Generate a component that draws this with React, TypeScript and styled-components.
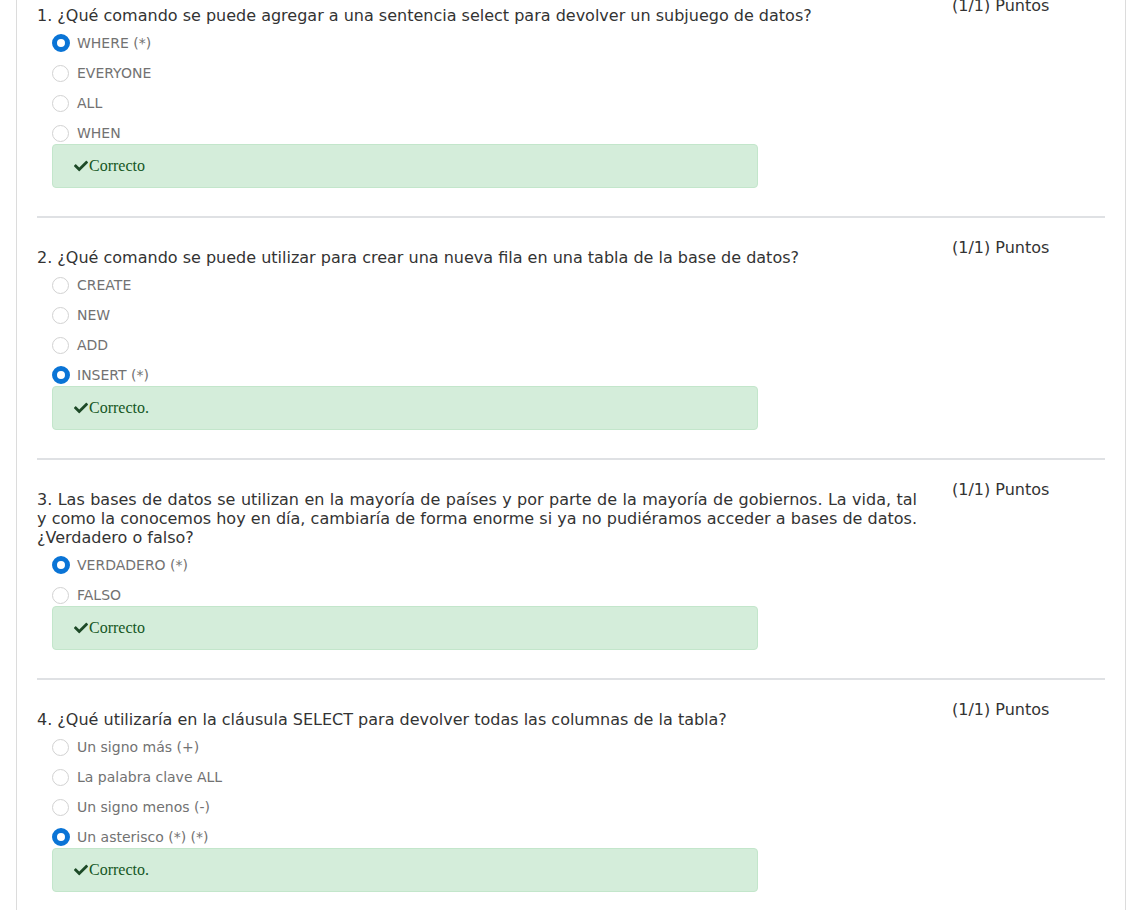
import styled, { createGlobalStyle } from "styled-components";
import { FaCheck } from "react-icons/fa";

const GlobalStyle = createGlobalStyle`
    body {
        margin: 0;
        background: #ffffff;
        font-family: "DejaVu Sans", Verdana, sans-serif;
    }
`;

const Page = styled.div`
    padding: 0 0 0 16px;
    width: 1110px;
    overflow: hidden;
    height: 910px;
`;

const Card = styled.div`
    margin-top: -26px;
    border-left: 1px solid #dcdcdc;
    border-right: 1px solid #dcdcdc;
    padding: 0 20px;
`;

const Block = styled.section`
    border-top: 2px solid #dfe1e4;
    padding: 20px 0 28px;
    display: grid;
    grid-template-columns: 880px 1fr;
    column-gap: 35px;
    align-items: start;
`;

const Main = styled.div`
    margin-top: 10px;
`;

const Question = styled.div`
    font-size: 16px;
    line-height: 19px;
    color: #333;
    text-align: justify;
`;

const Points = styled.div`
    font-size: 16px;
    line-height: 19px;
    color: #333;
`;

const Options = styled.ul`
    list-style: none;
    margin: 8px 0 0 15px;
    padding: 0;
    display: flex;
    flex-direction: column;
    gap: 10px;
`;

const Option = styled.li`
    display: flex;
    align-items: center;
    height: 20px;
    font-size: 14px;
    color: #727272;
`;

const Radio = styled.span<{ $checked?: boolean }>`
    width: ${(p) => (p.$checked ? "18px" : "17px")};
    height: ${(p) => (p.$checked ? "18px" : "17px")};
    box-sizing: border-box;
    border-radius: 50%;
    margin: ${(p) => (p.$checked ? "0 7px 0 0" : "0 8px 0 0")};
    flex: none;
    background: #ffffff;
    border: ${(p) => (p.$checked ? "5px solid #0a74d6" : "1px solid #d2d2d2")};
`;

const Feedback = styled.div`
    margin: 1px 0 0 15px;
    width: 706px;
    height: 44px;
    box-sizing: border-box;
    background: #d4edda;
    border: 1px solid #c3e6cb;
    border-radius: 4px;
    padding-left: 21px;
    display: flex;
    align-items: center;
    font-family: "Liberation Serif", serif;
    font-size: 16px;
    color: #155724;
    svg {
        color: #1d4a27;
        width: 14px;
        height: 14px;
        margin-right: 1px;
    }
`;

interface IQuestion {
    text: string;
    options: string[];
    answer: number;
    feedback: string;
}

const questions: IQuestion[] = [
    {
        text: "1. ¿Qué comando se puede agregar a una sentencia select para devolver un subjuego de datos?",
        options: ["WHERE (*)", "EVERYONE", "ALL", "WHEN"],
        answer: 0,
        feedback: "Correcto",
    },
    {
        text: "2. ¿Qué comando se puede utilizar para crear una nueva fila en una tabla de la base de datos?",
        options: ["CREATE", "NEW", "ADD", "INSERT (*)"],
        answer: 3,
        feedback: "Correcto.",
    },
    {
        text: "3. Las bases de datos se utilizan en la mayoría de países y por parte de la mayoría de gobiernos. La vida, tal y como la conocemos hoy en día, cambiaría de forma enorme si ya no pudiéramos acceder a bases de datos. ¿Verdadero o falso?",
        options: ["VERDADERO (*)", "FALSO"],
        answer: 0,
        feedback: "Correcto",
    },
    {
        text: "4. ¿Qué utilizaría en la cláusula SELECT para devolver todas las columnas de la tabla?",
        options: ["Un signo más (+)", "La palabra clave ALL", "Un signo menos (-)", "Un asterisco (*) (*)"],
        answer: 3,
        feedback: "Correcto.",
    },
];

function App() {
    return (
        <Page>
            <GlobalStyle />
            <Card>
                {questions.map((q, i) => (
                    <Block key={i}>
                        <Main>
                            <Question>{q.text}</Question>
                            <Options>
                                {q.options.map((o, j) => (
                                    <Option key={j}>
                                        <Radio $checked={j === q.answer} />
                                        {o}
                                    </Option>
                                ))}
                            </Options>
                            <Feedback>
                                <FaCheck />
                                {q.feedback}
                            </Feedback>
                        </Main>
                        <Points>(1/1) Puntos</Points>
                    </Block>
                ))}
            </Card>
        </Page>
    );
}

export default App;
